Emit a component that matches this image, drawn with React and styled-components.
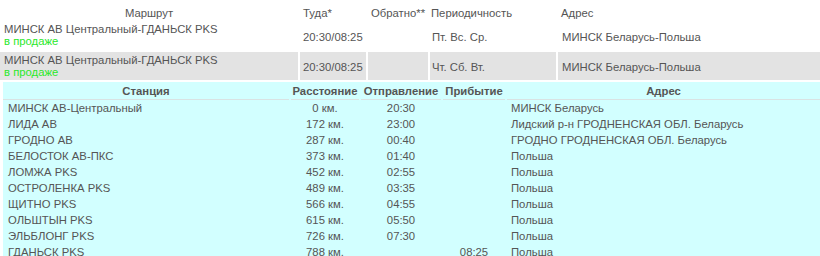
import React from "react";
import styled, { createGlobalStyle } from "styled-components";

const GlobalStyle = createGlobalStyle`
  body {
    margin: 0;
    background: #fff;
    font-family: "Liberation Sans", Arial, sans-serif;
    font-size: 11.3px;
    color: #555;
  }
`;

const RouteTable = styled.div`
  display: grid;
  grid-template-columns: 298px 66px 60px 126px 1fr;
  column-gap: 2px;
  row-gap: 2px;
  width: 820px;
`;

const HeadCell = styled.div`
  height: 20px;
  padding: 6px ${(p) => p.$pad || 3}px 0;
  box-sizing: border-box;
  line-height: 14px;
  text-align: ${(p) => p.$align || "left"};
  white-space: nowrap;
`;

const Cell = styled.div`
  height: 28px;
  box-sizing: border-box;
  padding: ${(p) => (p.$shade ? 2 : 1)}px ${(p) => p.$pad || 3}px 0;
  background: ${(p) => (p.$shade ? "#e3e3e3" : "transparent")};
  display: flex;
  flex-direction: column;
  justify-content: ${(p) => (p.$middle ? "center" : "flex-start")};
  white-space: nowrap;
`;

const RouteName = styled.div`
  line-height: 12px;
`;

const Status = styled.div`
  line-height: 12px;
  color: #2ae82a;
`;

const Details = styled.div`
  grid-column: 1 / -1;
  margin-left: 3px;
  background: #d2ffff;
  padding-top: 1px;
  padding-bottom: 4px;
`;

const StopTable = styled.div`
  display: grid;
  grid-template-columns: 286px 68px 80px 62px 1fr;
  column-gap: 2px;
`;

const StopHead = styled.div`
  font-weight: bold;
  line-height: 16px;
  text-align: center;
  border-bottom: 1px solid #d9e3e3;
  white-space: nowrap;
`;

const StopCell = styled.div`
  line-height: 16px;
  height: 16px;
  text-align: ${(p) => p.$align || "center"};
  padding-left: ${(p) => p.$pad || 0}px;
  white-space: nowrap;
`;

const routes = [
  { name: "МИНСК АВ Центральный-ГДАНЬСК PKS", there: "20:30/08:25", back: "", days: "Пт. Вс. Ср.", addr: "МИНСК Беларусь-Польша", shade: false },
  { name: "МИНСК АВ Центральный-ГДАНЬСК PKS", there: "20:30/08:25", back: "", days: "Чт. Сб. Вт.", addr: "МИНСК Беларусь-Польша", shade: true },
];

const stops = [
  ["МИНСК АВ-Центральный", "0 км.", "20:30", "", "МИНСК Беларусь"],
  ["ЛИДА АВ", "172 км.", "23:00", "", "Лидский р-н ГРОДНЕНСКАЯ ОБЛ. Беларусь"],
  ["ГРОДНО АВ", "287 км.", "00:40", "", "ГРОДНО ГРОДНЕНСКАЯ ОБЛ. Беларусь"],
  ["БЕЛОСТОК АВ-ПКС", "373 км.", "01:40", "", "Польша"],
  ["ЛОМЖА PKS", "452 км.", "02:55", "", "Польша"],
  ["ОСТРОЛЕНКА PKS", "489 км.", "03:35", "", "Польша"],
  ["ЩИТНО PKS", "566 км.", "04:55", "", "Польша"],
  ["ОЛЬШТЫН PKS", "615 км.", "05:50", "", "Польша"],
  ["ЭЛЬБЛОНГ PKS", "726 км.", "07:30", "", "Польша"],
  ["ГДАНЬСК PKS", "788 км.", "", "08:25", "Польша"],
];

const App = () => (
  <>
    <GlobalStyle />
    <RouteTable>
      <HeadCell $align="center">Маршрут</HeadCell>
      <HeadCell>Туда*</HeadCell>
      <HeadCell>Обратно**</HeadCell>
      <HeadCell $pad={1}>Периодичность</HeadCell>
      <HeadCell>Адрес</HeadCell>

      {routes.map((r, i) => (
        <React.Fragment key={i}>
          <Cell $shade={r.shade} $pad={4}>
            <RouteName>{r.name}</RouteName>
            <Status>в продаже</Status>
          </Cell>
          <Cell $shade={r.shade} $middle>{r.there}</Cell>
          <Cell $shade={r.shade} $middle>{r.back}</Cell>
          <Cell $shade={r.shade} $middle $pad={2}>{r.days}</Cell>
          <Cell $shade={r.shade} $middle $pad={4}>{r.addr}</Cell>
        </React.Fragment>
      ))}

      <Details>
        <StopTable>
          <StopHead>Станция</StopHead>
          <StopHead>Расстояние</StopHead>
          <StopHead>Отправление</StopHead>
          <StopHead>Прибытие</StopHead>
          <StopHead>Адрес</StopHead>
          {stops.map((s, i) => (
            <React.Fragment key={i}>
              <StopCell $align="left" $pad={5}>{s[0]}</StopCell>
              <StopCell>{s[1]}</StopCell>
              <StopCell>{s[2]}</StopCell>
              <StopCell>{s[3]}</StopCell>
              <StopCell $align="left" $pad={4}>{s[4]}</StopCell>
            </React.Fragment>
          ))}
        </StopTable>
      </Details>
    </RouteTable>
  </>
);

export default App;
